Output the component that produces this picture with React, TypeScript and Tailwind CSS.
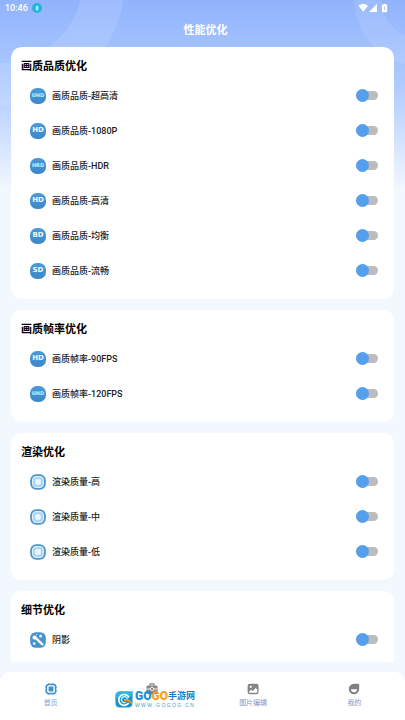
import type { ReactNode } from "react";

type IconKind = "UHD" | "HD" | "HRD" | "BD" | "SD" | "chip" | "wand";

interface Option {
  label: string;
  icon: IconKind;
}

interface Section {
  title: string;
  options: Option[];
}

const sections: Section[] = [
  {
    title: "画质品质优化",
    options: [
      { label: "画质品质-超高清", icon: "UHD" },
      { label: "画质品质-1080P", icon: "HD" },
      { label: "画质品质-HDR", icon: "HRD" },
      { label: "画质品质-高清", icon: "HD" },
      { label: "画质品质-均衡", icon: "BD" },
      { label: "画质品质-流畅", icon: "SD" },
    ],
  },
  {
    title: "画质帧率优化",
    options: [
      { label: "画质帧率-90FPS", icon: "HD" },
      { label: "画质帧率-120FPS", icon: "UHD" },
    ],
  },
  {
    title: "渲染优化",
    options: [
      { label: "渲染质量-高", icon: "chip" },
      { label: "渲染质量-中", icon: "chip" },
      { label: "渲染质量-低", icon: "chip" },
    ],
  },
  {
    title: "细节优化",
    options: [{ label: "阴影", icon: "wand" }],
  },
];

function OptionIcon({ kind }: { kind: IconKind }) {
  if (kind === "chip") {
    return (
      <svg viewBox="0 0 16 16" className="size-4 shrink-0" aria-hidden="true">
        <rect x="0.2" y="0.2" width="15.6" height="15.6" rx="6" fill="#4f95c9" />
        <rect x="2.6" y="2.6" width="10.8" height="10.8" rx="3.6" fill="#a9d4f1" stroke="#d9effc" strokeWidth="1.2" />
        <rect x="4.8" y="4.8" width="6.4" height="6.4" rx="1.4" fill="#eaf7ff" stroke="#8cc3e8" strokeWidth="0.5" />
      </svg>
    );
  }
  if (kind === "wand") {
    return (
      <svg viewBox="0 0 16 16" className="size-4 shrink-0" aria-hidden="true">
        <rect x="0.2" y="0.2" width="15.6" height="15.6" rx="5.5" fill="#4593cb" />
        <path d="M6.4 6.6 12.4 12.4" stroke="#fff" strokeWidth="2.4" strokeLinecap="round" />
        <circle cx="4.6" cy="5.6" r="2.1" fill="#fff" />
        <circle cx="10.6" cy="4" r="1.5" fill="#e3f3ff" />
        <circle cx="6.8" cy="2.6" r="0.7" fill="#cfe9fb" />
        <circle cx="4.2" cy="11.6" r="1.4" fill="#e3f3ff" />
      </svg>
    );
  }
  return (
    <span
      className={`flex size-4 shrink-0 items-center justify-center rounded-[7px] bg-linear-to-b from-[#4a9ad8] to-[#3c88c8] font-['DejaVu_Sans',sans-serif] font-bold leading-none ${
        kind.length === 3 ? "text-[5px] text-[#d6ecfc]" : "text-[7px] text-[#f0f9ff]"
      }`}
      aria-hidden="true"
    >
      {kind}
    </span>
  );
}

function OptionRow({ label, icon }: Option) {
  return (
    <label className="flex h-[35px] items-center gap-[6px]">
      <OptionIcon kind={icon} />
      <span className="flex-1 text-[9px] font-medium leading-4 text-[#1c1c1c]">{label}</span>
      <input
        type="checkbox"
        role="switch"
        className="relative h-[9px] w-[22px] appearance-none rounded-full bg-[#bcbcbe] before:absolute before:-top-[2px] before:left-0 before:size-[13px] before:rounded-full before:bg-[#559fec] checked:bg-[#a9cff6] checked:before:left-[9px]"
      />
    </label>
  );
}

function SectionCard({ title, options }: Section) {
  return (
    <section className="rounded-[10px] bg-white pt-[9px] pr-4 pb-[11px] pl-[10px] last:pb-10">
      <h2 className="text-[11px] font-bold leading-[22px] text-black">{title}</h2>
      <div className="pl-[9px]">
        {options.map((option) => (
          <OptionRow key={option.label} {...option} />
        ))}
      </div>
    </section>
  );
}

function StatusBar() {
  return (
    <div className="flex h-4 items-center justify-between pr-[17px] pl-[5px] text-white">
      <div className="flex items-center gap-1">
        <span className="text-[9px] font-medium leading-4">10:46</span>
        <svg viewBox="0 0 10 10" className="size-[10px]" aria-hidden="true">
          <circle cx="5" cy="5" r="5" fill="#1fb5df" />
          <path d="M5 2.2 6.4 3.8V6.8L5 8 3.8 6.8V3.8Z" fill="#a8eef5" />
        </svg>
      </div>
      <svg viewBox="0 0 30 10" className="h-[10px] w-[30px]" fill="currentColor" aria-hidden="true">
        <path d="M0.5 2.8C3.4 0.5 7.2 0.5 10 2.8L5.3 8.8Z" />
        <path d="M19 1V9H11Z" />
        <path d="M24.6 1.6H25.6V0.8H27.6V1.6H28.6Q29.2 1.6 29.2 2.2V8.6Q29.2 9.2 28.6 9.2H24.6Q24 9.2 24 8.6V2.2Q24 1.6 24.6 1.6Z" />
        <path d="M26.3 3.4H27.1V6.9H26.3Z" fill="#93b5fb" />
      </svg>
    </div>
  );
}

function NavItem({ label, active, children }: { label?: string; active?: boolean; children: ReactNode }) {
  return (
    <a
      href="#"
      aria-label={label ? undefined : "工具箱"}
      aria-current={active ? "page" : undefined}
      className="flex flex-1 flex-col items-center gap-[3px] pt-[11px]"
    >
      <svg viewBox="0 0 12 12" className="size-3" aria-hidden="true">
        {children}
      </svg>
      {label ? (
        <span className={`text-[7px] leading-[10px] ${active ? "text-[#7f9fda]" : "text-[#8c92bf]"}`}>{label}</span>
      ) : null}
    </a>
  );
}

function SiteMark() {
  return (
    <div className="pointer-events-none absolute top-[18px] left-[115px] flex items-center gap-[2px]">
      <svg viewBox="0 0 18 17" className="h-[17px] w-[18px]" aria-hidden="true">
        <path d="M5 0.5H17.5V12Q17.5 16.5 13 16.5H5Q0.5 16.5 0.5 12V5Q0.5 0.5 5 0.5Z" fill="#1593cf" />
        <path d="M5 0.5H17.5V6Q10 2 0.5 8V5Q0.5 0.5 5 0.5Z" fill="#32b4dc" />
        <path d="M14 6.5A5.4 5.4 0 1 0 13.6 12" fill="none" stroke="#fff" strokeWidth="1.7" />
        <path d="M12.4 8.6A3 3 0 1 0 10.7 11.4" fill="none" stroke="#d5f2fb" strokeWidth="1.3" />
        <path d="M9 9.2H13.2L17 12.6" fill="none" stroke="#f49a24" strokeWidth="1.7" />
      </svg>
      <div className="flex flex-col">
        <div className="flex items-center leading-[13px]">
          <span className="font-['Roboto',sans-serif] text-[12px] font-black text-[#1b8fd4]">
            GO<span className="text-[#f9a01b]">GO</span>
          </span>
          <span className="text-[9px] font-bold text-[#1681c6]">手游网</span>
        </div>
        <span className="font-['Liberation_Sans',sans-serif] text-[5px] leading-[5px] text-[#3e9ad0]">
          W W W . G O G O G . C N
        </span>
      </div>
    </div>
  );
}

export default function App() {
  return (
    <div className="relative flex h-screen flex-col overflow-hidden bg-[#f3f7fe] font-['Roboto','Noto_Sans_CJK_SC',sans-serif]">
      <div className="absolute inset-x-0 top-0 h-[190px] overflow-hidden bg-linear-to-b from-[#91b3fd] via-[#afcbff] via-45% to-[#f3f7fe]">
        <svg className="absolute top-0 left-0 h-32 w-40" viewBox="0 0 160 128" fill="none" aria-hidden="true">
          <circle cx="0" cy="-20" r="104" stroke="#fff" strokeOpacity="0.12" strokeWidth="42" />
        </svg>
        <svg className="absolute top-0 right-0 h-20 w-20" viewBox="0 0 80 80" fill="none" aria-hidden="true">
          <circle cx="95" cy="0" r="52" stroke="#fff" strokeOpacity="0.1" strokeWidth="27" />
        </svg>
      </div>

      <header className="relative">
        <StatusBar />
        <h1 className="h-[31px] pt-[5px] pl-[6px] text-center text-[11px] font-bold leading-5 text-white">性能优化</h1>
      </header>

      <main className="relative mx-[11px] mb-[10px] flex min-h-0 flex-1 flex-col gap-[11px] overflow-y-auto rounded-t-[10px] [scrollbar-width:none] [&>section]:shrink-0">
        {sections.map((section) => (
          <SectionCard key={section.title} {...section} />
        ))}
      </main>

      <nav className="relative flex h-12 shrink-0 rounded-t-[10px] bg-white">
        <NavItem label="首页" active>
          <rect x="1.4" y="1.4" width="9.2" height="9.2" rx="2.4" fill="none" stroke="#3f8fcf" strokeWidth="1.5" />
          <rect x="3.6" y="3.6" width="4.8" height="4.8" rx="0.6" fill="#3f8fcf" />
          <path d="M4 0V1.4M8 0V1.4M4 10.6V12M8 10.6V12M0 4H1.4M0 8H1.4M10.6 4H12M10.6 8H12" stroke="#3f8fcf" />
        </NavItem>
        <NavItem>
          <path d="M4 2.6V1.4Q4 0.8 4.6 0.8H7.4Q8 0.8 8 1.4V2.6" fill="none" stroke="#7b7b7b" strokeWidth="1.2" />
          <rect x="0.4" y="2.4" width="11.2" height="8.8" rx="1.6" fill="#868686" />
          <path d="M0.4 6H11.6" stroke="#fff" strokeWidth="0.9" />
          <circle cx="6" cy="6" r="1.7" fill="#868686" stroke="#fff" strokeWidth="0.8" />
        </NavItem>
        <NavItem label="图片编辑">
          <rect x="0.6" y="0.8" width="11" height="10.4" rx="2.2" fill="#858585" />
          <circle cx="3.8" cy="3.8" r="1.1" fill="#fff" />
          <path d="M1.8 8.8 4.2 6.8 6 8 8.5 5 10.4 6.8V8.6Q10.4 9.8 9.2 9.8H3Q1.8 9.8 1.8 8.8Z" fill="#fff" />
        </NavItem>
        <NavItem label="我的">
          <path d="M6 0.8H10.2Q11.2 0.8 11.2 1.8V6A5.2 5.2 0 1 1 6 0.8Z" fill="#808080" />
          <path d="M3 6.2H9A3 3 0 0 1 3 6.2Z" fill="#fff" />
        </NavItem>
        <SiteMark />
      </nav>
    </div>
  );
}
